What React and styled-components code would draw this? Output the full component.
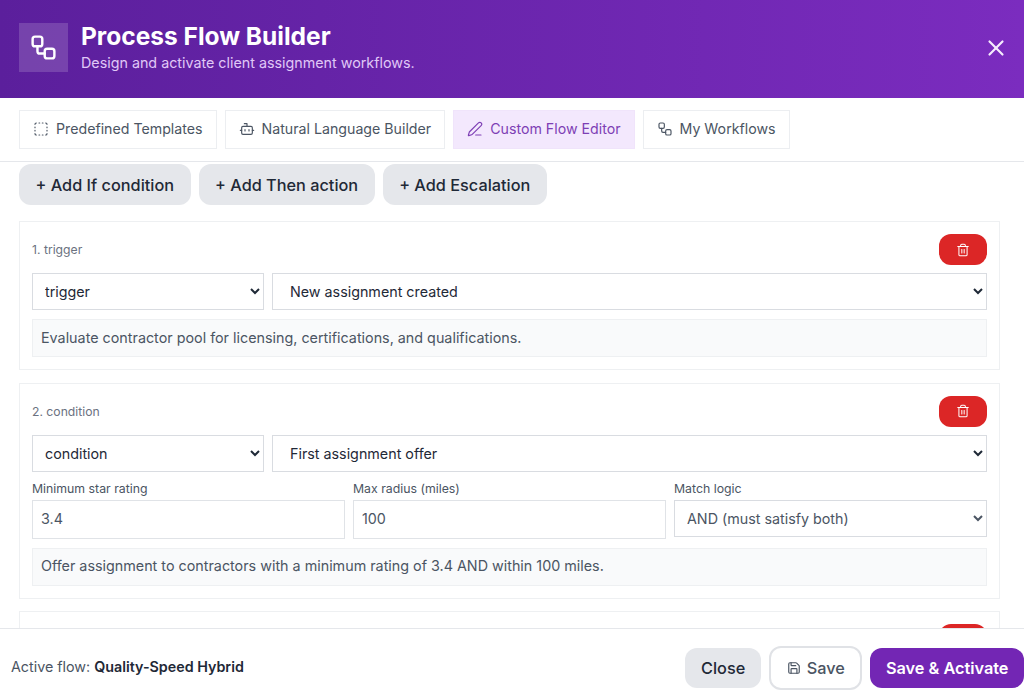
import React from 'react';
import styled, { createGlobalStyle } from 'styled-components';
import { Bot, PenLine, Save, SquareDashed, Trash2, Workflow, X } from 'lucide-react';

const GlobalStyle = createGlobalStyle`
  * { box-sizing: border-box; }
  html, body { margin: 0; height: 100%; background: #fff; }
  body { font-family: Inter, "Liberation Sans", sans-serif; color: #1f2937; }
`;

const Page = styled.div`
  height: 691px;
  display: flex;
  flex-direction: column;
  overflow: hidden;
  background: #fff;
`;

const Header = styled.header`
  height: 98px;
  flex: none;
  padding: 0 15px 3px 19px;
  display: flex;
  align-items: center;
  gap: 13px;
  color: #fff;
  background: linear-gradient(90deg, #5b1f9c, #7b2cbf);
`;

const LogoBox = styled.div`
  width: 49px;
  height: 49px;
  display: flex;
  align-items: center;
  justify-content: center;
  background: rgba(255, 255, 255, 0.16);
`;

const HeaderText = styled.div`
  flex: 1;
`;

const Title = styled.h1`
  margin: -2px 0 0;
  font-size: 24.5px;
  line-height: 28px;
  font-weight: 700;
`;

const Subtitle = styled.p`
  margin: 4px 0 0;
  font-size: 14.3px;
  line-height: 18px;
  color: #e0c8f7;
`;

const CloseIcon = styled.button`
  border: 0;
  padding: 0;
  background: none;
  color: #f5ecfd;
  display: flex;
`;

const TabBar = styled.nav`
  height: 64px;
  flex: none;
  padding: 12px 19px 0;
  display: flex;
  gap: 8px;
  border-bottom: 1px solid #e5e7eb;
`;

const Tab = styled.button`
  height: 39px;
  padding: 0 13px 2px;
  display: flex;
  align-items: center;
  gap: 7px;
  font: 400 14.2px Inter, sans-serif;
  color: ${p => (p.$active ? '#7e3fb5' : '#4b5563')};
  background: ${p => (p.$active ? '#f3e8fd' : '#fff')};
  border: 1px solid ${p => (p.$active ? '#f0e4fb' : '#eceef1')};
`;

const Content = styled.main`
  flex: 1;
  min-height: 0;
  overflow: hidden;
  padding: 2px 24px 0 19px;
`;

const AddRow = styled.div`
  display: flex;
  gap: 8px;
  margin-bottom: 16.4px;
`;

const AddButton = styled.button`
  height: 41px;
  padding: 0 16.5px;
  border: 0;
  border-radius: 12px;
  background: #e5e7eb;
  color: #1f2937;
  font: 500 16.3px Inter, sans-serif;
`;

const Card = styled.section`
  border: 1px solid #eef0f2;
  padding: 12px;
  margin-bottom: 12.5px;
`;

const CardHead = styled.div`
  display: flex;
  align-items: center;
  justify-content: space-between;
  height: 31px;
  margin-bottom: 8px;
`;

const StepLabel = styled.span`
  font-size: 12.2px;
  color: #6b7280;
`;

const DeleteButton = styled.button`
  width: 48px;
  height: 31px;
  border: 0;
  border-radius: 12px;
  background: #dc2626;
  color: #fff;
  display: flex;
  align-items: center;
  justify-content: center;
`;

const SelectRow = styled.div`
  display: grid;
  grid-template-columns: 232px 1fr;
  gap: 8px;
`;

const Select = styled.select`
  width: 100%;
  height: 37px;
  padding: 0 ${p => (p.$wide ? '13px' : '8px')};
  border: 1px solid #d9dce1;
  background: #fff;
  color: ${p => (p.$muted ? '#4b5563' : '#1f2937')};
  font: 400 14.3px Inter, sans-serif;
`;

const FieldGrid = styled.div`
  display: grid;
  grid-template-columns: repeat(3, 1fr);
  gap: 8px;
  margin-top: 9px;
`;

const Field = styled.label`
  display: flex;
  flex-direction: column;
  gap: 3px;
  font-size: 12.3px;
  line-height: 16px;
  color: #4b5563;
`;

const Input = styled.input`
  width: 100%;
  height: 39px;
  padding: 0 8px 2px;
  border: 1px solid #e0e3e7;
  color: #4b5563;
  font: 400 14.3px Inter, sans-serif;
`;

const Summary = styled.p`
  margin: 9px 0 0;
  height: 38px;
  padding: 0 8px 2px;
  display: flex;
  align-items: center;
  background: #f9fafb;
  border: 1px solid #eef0f2;
  font-size: 14.33px;
  color: #4b5563;
`;

const Footer = styled.footer`
  height: 63px;
  flex: none;
  padding: 15px 0 0 11px;
  display: flex;
  align-items: center;
  justify-content: space-between;
  background: #fff;
  border-top: 1px solid #e5e7eb;
`;

const ActiveFlow = styled.div`
  margin-bottom: 2px;
  font-size: 14.3px;
  color: #4b5563;

  strong {
    font-weight: 600;
    color: #1f2937;
  }
`;

const FooterActions = styled.div`
  display: flex;
  align-items: center;
  gap: 8px;
`;

const FooterButton = styled.button`
  height: ${p => (p.$outline ? '44px' : '40px')};
  padding: 0 ${p => (p.$outline || p.$primary ? '15.5px' : '16px')};
  display: flex;
  align-items: center;
  gap: 6px;
  border-radius: 12px;
  border: ${p => (p.$outline ? '2px solid #e0e2e6' : '0')};
  background: ${p => (p.$primary ? '#7326b4' : p.$outline ? '#fff' : '#e5e7eb')};
  color: ${p => (p.$primary ? '#fff' : p.$outline ? '#4b5563' : '#1f2937')};
  font: ${p => (p.$primary ? 600 : 500)} 16.3px Inter, sans-serif;
`;

const tabs = [
  { label: 'Predefined Templates', Icon: SquareDashed },
  { label: 'Natural Language Builder', Icon: Bot },
  { label: 'Custom Flow Editor', Icon: PenLine, active: true },
  { label: 'My Workflows', Icon: Workflow },
];

const StepHead = ({ label }) => (
  <CardHead>
    <StepLabel>{label}</StepLabel>
    <DeleteButton aria-label="Delete step">
      <Trash2 size={14} strokeWidth={1.75} />
    </DeleteButton>
  </CardHead>
);

const TypeSelects = ({ type, event }) => (
  <SelectRow>
    <Select defaultValue={type}>
      <option>trigger</option>
      <option>condition</option>
      <option>action</option>
    </Select>
    <Select $wide defaultValue={event}>
      <option>{event}</option>
    </Select>
  </SelectRow>
);

export default function App() {
  return (
    <Page>
      <GlobalStyle />
      <Header>
        <LogoBox>
          <Workflow size={29} color="#fff" strokeWidth={2} />
        </LogoBox>
        <HeaderText>
          <Title>Process Flow Builder</Title>
          <Subtitle>Design and activate client assignment workflows.</Subtitle>
        </HeaderText>
        <CloseIcon aria-label="Close">
          <X size={26} />
        </CloseIcon>
      </Header>

      <TabBar>
        {tabs.map(({ label, Icon, active }) => (
          <Tab key={label} $active={active}>
            <Icon size={16} strokeWidth={1.75} />
            {label}
          </Tab>
        ))}
      </TabBar>

      <Content>
        <AddRow>
          <AddButton>+ Add If condition</AddButton>
          <AddButton>+ Add Then action</AddButton>
          <AddButton>+ Add Escalation</AddButton>
        </AddRow>

        <Card>
          <StepHead label="1. trigger" />
          <TypeSelects type="trigger" event="New assignment created" />
          <Summary>Evaluate contractor pool for licensing, certifications, and qualifications.</Summary>
        </Card>

        <Card>
          <StepHead label="2. condition" />
          <TypeSelects type="condition" event="First assignment offer" />
          <FieldGrid>
            <Field>
              Minimum star rating
              <Input defaultValue="3.4" />
            </Field>
            <Field>
              Max radius (miles)
              <Input defaultValue="100" />
            </Field>
            <Field>
              Match logic
              <Select $muted defaultValue="AND (must satisfy both)">
                <option>AND (must satisfy both)</option>
              </Select>
            </Field>
          </FieldGrid>
          <Summary>Offer assignment to contractors with a minimum rating of 3.4 AND within 100 miles.</Summary>
        </Card>

        <Card>
          <StepHead />
        </Card>
      </Content>

      <Footer>
        <ActiveFlow>
          Active flow: <strong>Quality-Speed Hybrid</strong>
        </ActiveFlow>
        <FooterActions>
          <FooterButton>Close</FooterButton>
          <FooterButton $outline>
            <Save size={14} strokeWidth={2} />
            Save
          </FooterButton>
          <FooterButton $primary>Save &amp; Activate</FooterButton>
        </FooterActions>
      </Footer>
    </Page>
  );
}
